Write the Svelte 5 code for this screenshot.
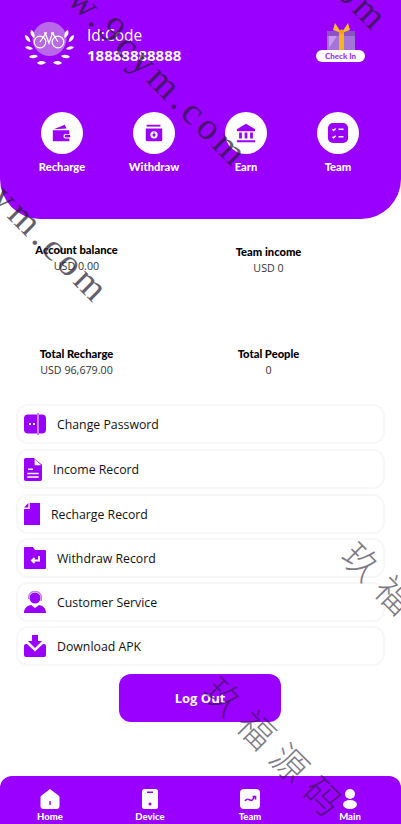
<script>
  const actions = [
    { label: 'Recharge', icon: 'wallet' },
    { label: 'Withdraw', icon: 'withdraw' },
    { label: 'Earn', icon: 'bank' },
    { label: 'Team', icon: 'list' }
  ];
  const stats = [
    { title: 'Account balance', value: 'USD 0.00', shift: 'up' },
    { title: 'Team income', value: 'USD 0', shift: '' },
    { title: 'Total Recharge', value: 'USD 96,679.00', shift: '' },
    { title: 'Total People', value: '0', shift: '' }
  ];
  const rows = [
    { label: 'Change Password', icon: 'lock', tall: true },
    { label: 'Income Record', icon: 'doc', tall: true },
    { label: 'Recharge Record', icon: 'page' },
    { label: 'Withdraw Record', icon: 'folder' },
    { label: 'Customer Service', icon: 'agent' },
    { label: 'Download APK', icon: 'download' }
  ];
  const tabs = [
    { label: 'Home', icon: 'home' },
    { label: 'Device', icon: 'device' },
    { label: 'Team', icon: 'chart' },
    { label: 'Main', icon: 'user' }
  ];
  const marks = [
    { t: 'www.9cym.com', x: 30, y: -72, c: 'latin' },
    { t: 'www.9cym.com', x: -109, y: 64, c: 'latin' },
    { t: 'www.9cym.com', x: 170, y: -208, c: 'latin' },
    { t: '玖福源码', x: 350, y: 529, c: 'cjk' },
    { t: '玖福源码', x: 212, y: 664, c: 'cjk' }
  ];
</script>

<div class="page">
  <header class="hero">
    <div class="profile">
      <svg class="logo" viewBox="0 0 50 44" aria-hidden="true">
        <circle cx="24.500" cy="17" r="17" fill="#b868e8" />
        <g fill="#fff">
          <path d="M6 8c3 1 4 4 3.500 8-3-1.500-5-4-3.500-8zM0 13c3 .5 5 3 5.500 7-3.500-.5-5.500-3-5.500-7zM0 25c3-1.500 6-.5 8 2-3 1.500-6 .5-8-2zM4 35c2-2.500 6-3 9-1-2.500 2.500-6 3-9 1zM12 41c2.500-2.500 6-2.500 9-.5-2.500 2.500-6.500 3-9 .5z" />
          <path d="M43 8c-3 1-4 4-3.500 8 3-1.500 5-4 3.500-8zM49 13c-3 .5-5 3-5.500 7 3.500-.5 5.500-3 5.500-7zM49 25c-3-1.500-6-.5-8 2 3 1.500 6 .5 8-2zM45 35c-2-2.500-6-3-9-1 2.500 2.500 6 3 9 1zM37 41c-2.500-2.500-6-2.500-9-.5 2.500 2.500 6.500 3 9 .5z" />
        </g>
        <g fill="none" stroke="#fff" stroke-width="1.300">
          <circle cx="15" cy="20" r="5.800" />
          <circle cx="33" cy="20" r="5.800" />
          <path d="M15 20l5.500-8 3.500 9 3.500-10 5.500 9M19 11h3M26 11h3" />
        </g>
      </svg>
      <div class="who">
        <div class="code">Id:Code</div>
        <div class="phone">18888888888</div>
      </div>
      <div class="gift">
        <svg viewBox="0 0 28 28" class="box" aria-hidden="true">
          <rect x="0" y="8" width="28" height="20" fill="#a574d8" />
          <rect x="0" y="8" width="28" height="5" rx="1" fill="#8b52c4" />
          <path d="M2 13h8l-8 12z" fill="#c49cec" />
          <rect x="12" y="8" width="5" height="20" fill="#f9b31e" />
          <path d="M14.500 10L8 0 6 7zM14.500 10L21 0l2 7z" fill="#fbbe2a" />
          <circle cx="14.500" cy="9" r="2.500" fill="#f5a313" />
        </svg>
        <span class="checkin">Check In</span>
      </div>
    </div>

    <nav class="actions">
      {#each actions as a}
        <div class="action">
          <span class="disc">
            <svg viewBox="0 0 24 24" aria-hidden="true">
              {#if a.icon === 'wallet'}
                <path d="M3 8l12-5 2 4zM2 9h18v4h-4a2.500 2.500 0 0 0 0 5h4v3H2z" fill="#9900ff" />
                <rect x="15" y="14" width="6" height="3" rx="1.500" fill="#9900ff" />
              {:else if a.icon === 'withdraw'}
                <path d="M4 3h15v2H4z" fill="#9900ff" />
                <path d="M3 7h18v12a2 2 0 0 1-2 2H5a2 2 0 0 1-2-2z" fill="#9900ff" />
                <circle cx="12" cy="14" r="4" fill="#fff" />
                <path d="M12 11.500v3M10.500 13.500L12 15.500l1.500-2" stroke="#9900ff" stroke-width="1.300" fill="none" />
              {:else if a.icon === 'bank'}
                <path d="M12 2L2 8v2h20V8zM2 20h20v2H2zM4.500 11.500h3V18h-3zM10.500 11.500h3V18h-3zM16.500 11.500h3V18h-3z" fill="#9900ff" />
              {:else}
                <rect x="1" y="1" width="22" height="22" rx="5.500" fill="#9900ff" />
                <path d="M6 8l1.200 1.200L9.500 7M6 16l1.200 1.200L9.500 15M12.500 8h5.500M12.500 16h5.500" stroke="#fff" stroke-width="1.600" fill="none" />
              {/if}
            </svg>
          </span>
          <span class="action-label">{a.label}</span>
        </div>
      {/each}
    </nav>
  </header>

  <section class="stats">
    {#each stats as s}
      <div class="stat" class:up={s.shift === 'up'}>
        <div class="stat-title">{s.title}</div>
        <div class="stat-value">{s.value}</div>
      </div>
    {/each}
  </section>

  <ul class="menu">
    {#each rows as r}
      <li class="row" class:tall={r.tall}>
        <svg class="row-icon {r.icon}" viewBox="0 0 22 22" preserveAspectRatio="none" aria-hidden="true">
          {#if r.icon === 'lock'}
            <path d="M13 1.500H4a4 4 0 0 0-4 4v11a4 4 0 0 0 4 4h9zM15 1.500h3a4 4 0 0 1 4 4v11a4 4 0 0 1-4 4h-3zM13.500 0h1v22h-1z" fill="#9900ff" />
            <path d="M5 10h2v2H5zM9 10h2v2H9z" fill="#fff" />
          {:else if r.icon === 'doc'}
            <path d="M2 0h10l10 6.500V20a2 2 0 0 1-2 2H2a2 2 0 0 1-2-2V2a2 2 0 0 1 2-2z" fill="#9900ff" />
            <path d="M13 1l8 6H13zM5 10h6v1.500H5zM4 14h14v1.500H4zM4 17.500h14V19H4z" fill="#fff" />
          {:else if r.icon === 'page'}
            <path d="M0 6h8V0h14v22H0zM0 4.500L6 0v4.500z" fill="#9900ff" />
          {:else if r.icon === 'folder'}
            <path d="M1 0h8l2 3h10a1 1 0 0 1 1 1v17a1 1 0 0 1-1 1H1a1 1 0 0 1-1-1V1a1 1 0 0 1 1-1z" fill="#9900ff" />
            <path d="M15 9v4.500H8.500M10.500 11l-2.500 2.500 2.500 2.500" fill="none" stroke="#fff" stroke-width="2" />
          {:else if r.icon === 'agent'}
            <circle cx="11" cy="7" r="5.500" fill="#9900ff" />
            <path d="M4 8V6.500a7 7 0 0 1 14 0V10h-1.500V6.500a5.500 5.500 0 0 0-11 0V8z" fill="#c77dff" />
            <path d="M0 22c0-4 2-7 7-8l4 3 4-3c5 1 7 4 7 8z" fill="#9900ff" />
          {:else}
            <path d="M8 0h6v6h4l-7 7-7-7h4z" fill="#9900ff" />
            <path d="M0 11a2 2 0 0 1 2-2h1l8 7.500 8-7.500h1a2 2 0 0 1 2 2v9a2 2 0 0 1-2 2H2a2 2 0 0 1-2-2z" fill="#9900ff" />
          {/if}
        </svg>
        <span class="row-label">{r.label}</span>
      </li>
    {/each}
  </ul>

  <button class="logout" type="button">Log Out</button>

  <footer class="tabs">
    {#each tabs as t}
      <div class="tab">
        <svg viewBox="0 0 20 20" aria-hidden="true">
          {#if t.icon === 'home'}
            <path d="M10 0l8.500 6.500a2 2 0 0 1 1 1.700V17a3 3 0 0 1-3 3h-13a3 3 0 0 1-3-3V8.200a2 2 0 0 1 1-1.700z" fill="#fff" />
            <rect x="9.300" y="12" width="1.400" height="4" fill="#9900ff" />
          {:else if t.icon === 'device'}
            <rect x="2" y="0" width="16" height="20" rx="2.500" fill="#fff" />
            <rect x="7" y="2.500" width="6" height="1.500" fill="#9900ff" />
            <circle cx="10" cy="15" r="1.500" fill="#9900ff" />
          {:else if t.icon === 'chart'}
            <rect width="20" height="20" rx="4" fill="#fff" />
            <path d="M5 12c2-3 3-2 5-1s3 0 4-3M12.500 7.500h3v3" fill="none" stroke="#9900ff" stroke-width="1.600" />
          {:else}
            <circle cx="10" cy="5" r="5" fill="#fff" />
            <ellipse cx="10" cy="15.500" rx="7" ry="4.500" fill="#fff" />
          {/if}
        </svg>
        <span class="tab-label">{t.label}</span>
      </div>
    {/each}
  </footer>

  <div class="watermarks" aria-hidden="true">
    {#each marks as m}
      <span class="mark {m.c}" style="left:{m.x}px;top:{m.y}px">{m.t}</span>
    {/each}
  </div>
</div>

<style>
  :global(body) {
    margin: 0;
    background: #fff;
    overflow: hidden;
  }
  .page {
    position: relative;
    width: 401px;
    height: 824px;
    display: flex;
    flex-direction: column;
    overflow: hidden;
    font-family: "Open Sans", "Noto Sans", sans-serif;
    color: #111;
  }
  .hero {
    height: 219px;
    box-sizing: border-box;
    padding: 22px 16px 0;
    background: #9900ff;
    border-radius: 0 0 40px 40px;
    color: #fff;
    flex: none;
  }
  .profile {
    display: flex;
    align-items: flex-start;
    padding: 0 20px 0 9px;
    height: 90px;
  }
  .logo {
    width: 50px;
    height: 44px;
    flex: none;
  }
  .who {
    margin-left: 12px;
    flex: 1;
    padding-top: 3px;
  }
  .code {
    font-size: 15.500px;
    line-height: 20px;
  }
  .phone {
    font-size: 15px;
    line-height: 20px;
    font-weight: 700;
  }
  .gift {
    position: relative;
    width: 49px;
    height: 39px;
    margin-top: 1px;
    display: flex;
    justify-content: center;
  }
  .box {
    width: 28px;
    height: 28px;
  }
  .checkin {
    position: absolute;
    left: 0;
    right: 0;
    bottom: 0;
    height: 12px;
    border-radius: 6px;
    background: #fff;
    color: #9b2ff0;
    font-family: Lato, sans-serif;
    font-size: 8px;
    line-height: 12px;
    font-weight: 900;
    text-align: center;
  }
  .actions {
    display: grid;
    grid-template-columns: repeat(4, 92px);
  }
  .action {
    display: flex;
    flex-direction: column;
    align-items: center;
  }
  .disc {
    width: 42px;
    height: 42px;
    border-radius: 50%;
    background: #fff;
    display: flex;
    align-items: center;
    justify-content: center;
  }
  .disc svg {
    width: 22px;
    height: 22px;
  }
  .action-label {
    margin-top: 5px;
    font-family: Lato, sans-serif;
    font-size: 11.200px;
    line-height: 16px;
    font-weight: 900;
  }
  .stats {
    display: grid;
    grid-template-columns: 153px 153px;
    column-gap: 39px;
    grid-auto-rows: 102px;
    padding-top: 24px;
    height: 161px;
    flex: none;
    overflow: hidden;
  }
  .stat {
    text-align: center;
  }
  .stat.up {
    margin-top: -2px;
  }
  .stat-title {
    font-family: Lato, sans-serif;
    font-size: 11.200px;
    line-height: 17px;
    font-weight: 900;
    color: #000;
  }
  .stat-value {
    font-size: 10.700px;
    line-height: 17px;
    color: #333;
  }
  .menu {
    list-style: none;
    margin: 0;
    padding: 0 16px;
    display: flex;
    flex-direction: column;
    gap: 4px;
  }
  .row {
    height: 40px;
    box-sizing: border-box;
    border: 2px solid #f7f7f7;
    border-radius: 12px;
    display: flex;
    align-items: center;
    padding-left: 6px;
    gap: 11px;
  }
  .row.tall {
    margin-bottom: 1px;
  }
  .row-label {
    font-size: 12.300px;
    color: #111;
  }
  .row-icon {
    width: 22px;
    height: 22px;
    flex: none;
  }
  .row-icon.doc {
    width: 18px;
    height: 23px;
  }
  .row-icon.page {
    width: 16px;
  }
  .logout {
    align-self: flex-start;
    width: 162px;
    height: 48px;
    margin: 8px 0 0 119px;
    border: 0;
    border-radius: 12px;
    background: #9900ff;
    color: #fff;
    font: 700 13px "Open Sans", "Noto Sans", sans-serif;
  }
  .tabs {
    margin-top: auto;
    height: 48px;
    background: #9900ff;
    border-radius: 12px 12px 0 0;
    display: grid;
    grid-template-columns: repeat(4, 100px);
    color: #fff;
    flex: none;
  }
  .tab {
    display: flex;
    flex-direction: column;
    align-items: center;
    padding-top: 13px;
    box-sizing: border-box;
  }
  .tab svg {
    width: 20px;
    height: 20px;
  }
  .tab-label {
    font-family: Lato, sans-serif;
    font-size: 9.500px;
    line-height: 13px;
    font-weight: 900;
    margin-top: 1px;
  }
  .watermarks {
    position: absolute;
    inset: 0;
    pointer-events: none;
    overflow: hidden;
  }
  .mark {
    position: absolute;
    transform: rotate(45deg);
    transform-origin: 0 50%;
    white-space: nowrap;
    color: rgba(40, 30, 50, .72);
  }
  .latin {
    font: 38px/1 "Liberation Serif", serif;
    letter-spacing: 4.500px;
  }
  .cjk {
    font: 300 36px/1 "Noto Sans CJK SC", sans-serif;
    letter-spacing: 11px;
    color: rgba(40, 30, 50, .6);
  }
</style>
